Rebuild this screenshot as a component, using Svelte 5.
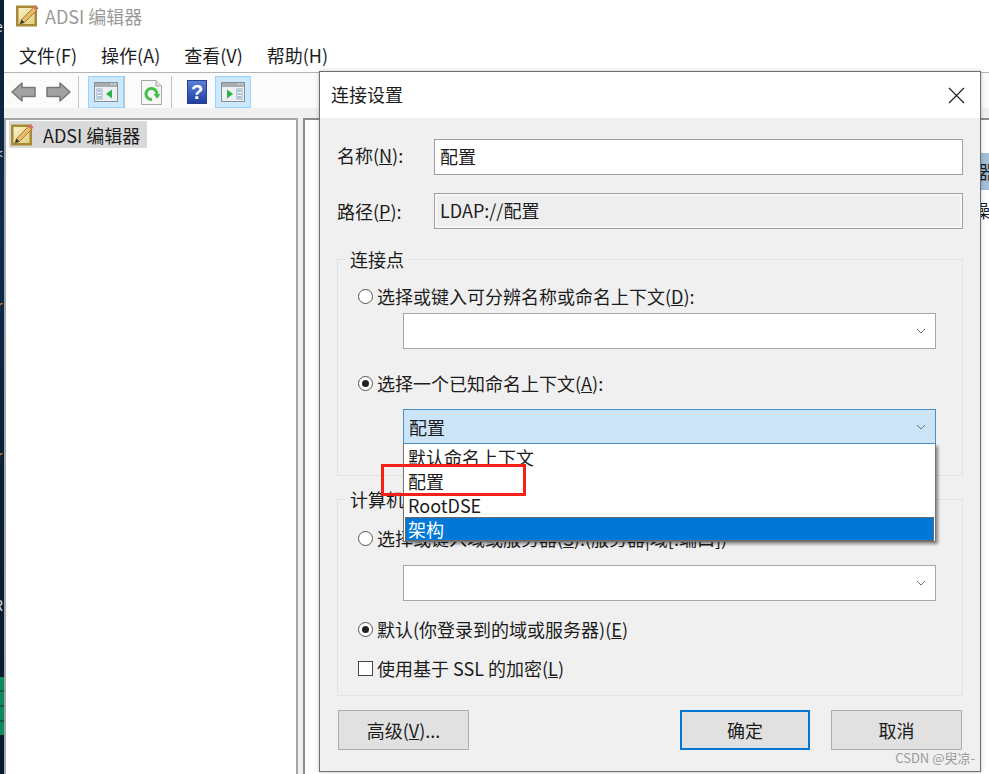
<script>
  const menus = [
    ['文件', 'F'],
    ['操作', 'A'],
    ['查看', 'V'],
    ['帮助', 'H']
  ];
  const options = ['默认命名上下文', '配置', 'RootDSE', '架构'];
</script>

{#snippet adsiIcon()}
  <svg class="adsi" viewBox="0 0 24 23">
    <defs>
      <linearGradient id="sheet" x1="0" y1="0" x2="1" y2="1">
        <stop offset="0" stop-color="#f8f0c8" />
        <stop offset="1" stop-color="#e6cf7c" />
      </linearGradient>
    </defs>
    <rect x="0" y="1.5" width="21" height="21" fill="#a98a34" />
    <rect x="2.5" y="4" width="16" height="16" fill="url(#sheet)" />
    <path d="M4 20 L5.5 15.5 L17.5 3.5 L20.5 6.5 L8.5 18.5 Z" fill="#e9bb5e" stroke="#75664a" stroke-width="0.7" />
    <path d="M4 20 L5.5 15.5 L8.5 18.5 Z" fill="#3d3a33" />
    <path d="M17.5 3.5 L19.6 1.2 L22.6 4.2 L20.5 6.5 Z" fill="#d9706a" />
  </svg>
{/snippet}

{#snippet chevron()}
  <svg class="chev" viewBox="0 0 10 6"><path d="M1 1 L5 5 L9 1" fill="none" stroke="#707070" stroke-width="1" /></svg>
{/snippet}

<div class="desk">
  <div class="strip">
    <i class="mark m1">e</i>
    <i class="mark m2">&lt;</i>
    <i class="mark m3">r</i>
    <i class="mark m4">r</i>
    <i class="mark m5">R</i>
    <b class="green"></b>
  </div>

  <div class="window">
    <div class="titlebar">
      <span class="tb-icon">{@render adsiIcon()}</span>
      <span class="tb-text">ADSI 编辑器</span>
    </div>
    <div class="menubar">
      {#each menus as [name, key]}
        <span>{name}({key})</span>
      {/each}
    </div>
    <div class="toolbar">
      <svg class="arrow first" viewBox="0 0 25 20"><path d="M1 10 L11 1 V5.5 H24 V14.5 H11 V19 Z" fill="#a2a2a2" stroke="#777" stroke-width="1.5" stroke-linejoin="round" /></svg>
      <svg class="arrow" viewBox="0 0 25 20"><path d="M24 10 L14 1 V5.5 H1 V14.5 H14 V19 Z" fill="#a2a2a2" stroke="#777" stroke-width="1.5" stroke-linejoin="round" /></svg>
      <span class="sep s1"></span>
      <span class="toggle">
        <svg viewBox="0 0 24 20" class="pane-ic">
          <rect x="0.5" y="0.5" width="23" height="19" fill="#eef1f2" stroke="#8a8f92" />
          <rect x="1" y="1" width="22" height="4" fill="#a9adaf" />
          <path d="M17 2h1.5M20 2h1.5" stroke="#fff" />
          <rect x="3" y="7" width="5" height="10" fill="#fff" stroke="#6f8ea8" stroke-width="0.7" />
          <path d="M4 9h3M4 12h3M4 15h3" stroke="#3f7fb5" />
          <path d="M18 7.5 V16.5 L12 12 Z" fill="#2bb24c" />
        </svg>
      </span>
      <span class="sep s2"></span>
      <svg class="page" viewBox="0 0 21 25">
        <path d="M0.5 0.5 H15 L20.5 6 V24.5 H0.5 Z" fill="#f6f6f6" stroke="#a8a8a8" />
        <path d="M15 0.5 V6 H20.5" fill="#e0e0e0" stroke="#a8a8a8" />
        <path d="M11 19.5 A5.5 5.5 0 1 1 16 14" fill="none" stroke="#45bd4f" stroke-width="3" />
        <path d="M12.5 14 H19.5 L16 18.8 Z" fill="#45bd4f" />
      </svg>
      <span class="sep s3"></span>
      <span class="help">?</span>
      <span class="toggle t2">
        <svg viewBox="0 0 24 20" class="pane-ic">
          <rect x="0.5" y="0.5" width="23" height="19" fill="#eef1f2" stroke="#8a8f92" />
          <rect x="1" y="1" width="22" height="4" fill="#a9adaf" />
          <path d="M17 2h1.5M20 2h1.5" stroke="#fff" />
          <rect x="16" y="7" width="5" height="10" fill="#fff" stroke="#6f8ea8" stroke-width="0.7" />
          <path d="M17 9h3M17 12h3M17 15h3" stroke="#3f7fb5" />
          <path d="M6 7.5 V16.5 L12 12 Z" fill="#2bb24c" />
        </svg>
      </span>
    </div>
    <div class="panes">
      <div class="tree">
        <div class="tree-item">
          {@render adsiIcon()}
          <span>ADSI 编辑器</span>
        </div>
      </div>
      <div class="content">
        <div class="actions">
          <div class="act-head">ADSI 编辑器</div>
          <div class="act-row">操作</div>
        </div>
      </div>
    </div>
  </div>

  <div class="dialog">
    <div class="dlg-title">
      <span class="dlg-name">连接设置</span>
      <svg class="close" viewBox="0 0 17 17"><path d="M1 1 L16 16 M16 1 L1 16" stroke="#1a1a1a" stroke-width="1.1" /></svg>
    </div>
    <div class="dlg-body">
      <div class="field">
        <span class="label up">名称(<u>N</u>):</span>
        <div class="input">配置</div>
      </div>
      <div class="field second">
        <span class="label">路径(<u>P</u>):</span>
        <div class="input readonly">LDAP://配置</div>
      </div>

      <div class="group first-group">
        <div class="legend">连接点</div>
        <div class="opt o1"><span class="radio"></span>选择或键入可分辨名称或命名上下文(<u>D</u>):</div>
        <div class="combo c1">{@render chevron()}</div>
        <div class="opt o2"><span class="radio on"></span>选择一个已知命名上下文(<u>A</u>):</div>
        <div class="combo focused c2">
          <span>配置</span>
          {@render chevron()}
          <div class="list">
            {#each options as option, i}
              <div class="item" class:sel={i === 3}>{option}</div>
            {/each}
          </div>
        </div>
      </div>

      <div class="group second-group">
        <div class="legend">计算机</div>
        <div class="opt o3"><span class="radio"></span>选择或键入域或服务器(<u>S</u>):(服务器|域[:端口])</div>
        <div class="combo c3">{@render chevron()}</div>
        <div class="opt o4"><span class="radio on"></span>默认(你登录到的域或服务器)(<u>E</u>)</div>
        <div class="opt o5"><span class="check"></span>使用基于 SSL 的加密(<u>L</u>)</div>
      </div>

      <div class="buttons">
        <button class="adv">高级(<u>V</u>)...</button>
        <button class="default">确定</button>
        <button>取消</button>
      </div>
    </div>
  </div>

  <div class="redbox"></div>
  <div class="watermark">CSDN @臾凉-</div>
</div>

<style>
  :global(body) {
    margin: 0;
    background: #fff;
  }
  .desk {
    position: relative;
    display: flex;
    width: 989px;
    height: 774px;
    overflow: hidden;
    font-family: "Noto Sans CJK SC", "Noto Sans", sans-serif;
    font-size: 18px;
    color: #1c1c1c;
  }
  .strip {
    position: relative;
    width: 4px;
    flex: none;
    overflow: hidden;
    background: linear-gradient(#0a2038, #0c2c4e 30%, #0a1f38 60%, #0a1a2e);
  }
  .mark {
    position: absolute;
    left: -5px;
    font-style: normal;
    font-size: 14px;
    line-height: 16px;
    color: #d8e2ea;
  }
  .m1 { top: 18px; }
  .m2 { top: 145px; }
  .m3 { top: 297px; left: -3px; color: #e08a1e; }
  .m4 { top: 447px; left: -3px; color: #e08a1e; }
  .m5 { top: 597px; left: -6px; }
  .green {
    position: absolute;
    top: 677px;
    left: 0;
    width: 4px;
    height: 58px;
    background: repeating-linear-gradient(#0e8a5f 0 13px, #0b5a4a 13px 15px);
  }
  .window {
    flex: 1;
    display: flex;
    flex-direction: column;
    min-width: 0;
  }
  .titlebar {
    height: 38px;
    display: flex;
    align-items: flex-start;
    padding-left: 12px;
    box-sizing: border-box;
  }
  .tb-icon {
    display: block;
    margin-top: 4px;
    line-height: 0;
  }
  .adsi {
    width: 24px;
    height: 23px;
  }
  .tb-text {
    margin: 3px 0 0 5px;
    line-height: 26px;
    color: #9a9a9a;
  }
  .menubar {
    height: 35px;
    box-sizing: border-box;
    display: flex;
    align-items: center;
    gap: 24px;
    padding-left: 15px;
    border-bottom: 1px solid #b4b4b4;
  }
  .toolbar {
    height: 35px;
    box-sizing: border-box;
    padding-top: 3px;
    display: flex;
    align-items: center;
    background: #fbfbfb;
  }
  .arrow {
    width: 25px;
    height: 20px;
    margin-left: 10px;
  }
  .arrow.first {
    margin-left: 7px;
  }
  .sep {
    width: 1px;
    height: 32px;
    background: #c4c4c4;
  }
  .s1 { margin: 0 9px 0 7px; }
  .s2 { margin: 0 16px 0 0; }
  .s3 { margin: 0 15px 0 9px; }
  .toggle {
    width: 36px;
    height: 32px;
    box-sizing: border-box;
    display: flex;
    align-items: center;
    justify-content: center;
    background: #cce8ff;
    border: 1px solid #99d1ff;
  }
  .t2 { margin-left: 8px; }
  .pane-ic {
    width: 24px;
    height: 20px;
  }
  .page {
    width: 21px;
    height: 25px;
  }
  .help {
    width: 20px;
    height: 24px;
    display: flex;
    align-items: center;
    justify-content: center;
    background: linear-gradient(#5a7fd8, #1f3f9e);
    border: 1px solid #2a3f86;
    box-sizing: border-box;
    color: #fff;
    font-family: "Liberation Sans", sans-serif;
    font-weight: 700;
    font-size: 20px;
  }
  .panes {
    flex: 1;
    min-height: 0;
    display: flex;
    gap: 5px;
    padding-top: 10px;
    background: #f0f0f0;
  }
  .tree {
    width: 294px;
    box-sizing: border-box;
    background: #fff;
    border: 2px solid #a6a6a6;
    border-width: 2px 2px 0;
    padding: 1px 0 0 3px;
  }
  .tree-item {
    width: 138px;
    height: 27px;
    display: flex;
    align-items: center;
    gap: 8px;
    padding-left: 2px;
    box-sizing: border-box;
    background: #d9d9d9;
  }
  .content {
    flex: 1;
    min-width: 0;
    background: #fff;
    border: 2px solid #8c8c8c;
    border-width: 2px 0 0 2px;
    overflow: hidden;
  }
  .actions {
    margin: 33px 0 0 560px;
    width: 200px;
  }
  .act-head {
    height: 37px;
    line-height: 37px;
    background: #a3bfda;
    text-indent: 34px;
    white-space: nowrap;
  }
  .act-row {
    margin-top: 8px;
    text-indent: 107px;
    line-height: 24px;
  }
  .dialog {
    position: absolute;
    left: 319px;
    top: 71px;
    width: 662px;
    height: 701px;
    box-sizing: border-box;
    border: 1px solid #6e6e6e;
    display: flex;
    flex-direction: column;
    box-shadow: 0 0 4px rgba(0, 0, 0, 0.25);
  }
  .dlg-title {
    height: 46px;
    flex: none;
    background: #fff;
    display: flex;
    align-items: center;
    justify-content: space-between;
    padding: 0 15px 0 11px;
  }
  .dlg-name {
    margin-bottom: 2px;
  }
  .close {
    width: 17px;
    height: 17px;
  }
  .dlg-body {
    flex: 1;
    background: #f0f0f0;
    padding: 21px 17px 0;
  }
  .field {
    display: flex;
    align-items: center;
    height: 36px;
  }
  .second {
    margin-top: 18px;
  }
  .label {
    width: 97px;
    flex: none;
    box-sizing: border-box;
  }
  .label.up {
    margin-bottom: 4px;
  }
  .input {
    width: 529px;
    height: 36px;
    box-sizing: border-box;
    display: flex;
    align-items: center;
    padding: 0 0 2px 5px;
    background: #fff;
    border: 1px solid #a0a0a0;
  }
  .readonly {
    background: #eeeeee;
    box-shadow: inset 0 0 0 2px #f8f8f8;
  }
  .group {
    border: 1px solid #e2e2e2;
    padding: 0 26px 0 20px;
    box-sizing: border-box;
  }
  .first-group {
    margin-top: 30px;
    height: 217px;
  }
  .second-group {
    margin-top: 23px;
    height: 197px;
  }
  .legend {
    width: fit-content;
    height: 24px;
    line-height: 24px;
    margin: -13px 0 0 -12px;
    padding: 0 4px;
    background: #f0f0f0;
  }
  .opt {
    display: flex;
    align-items: center;
    height: 24px;
    white-space: pre;
  }
  .o1 { margin-top: 13px; }
  .o2 { margin-top: 22px; }
  .o3 { margin-top: 15px; }
  .o4 { margin-top: 16px; }
  .o5 { margin-top: 15px; }
  .radio {
    width: 15px;
    height: 15px;
    box-sizing: border-box;
    flex: none;
    border: 1px solid #555;
    border-radius: 50%;
    background: #fff;
    margin-right: 4px;
    display: flex;
    align-items: center;
    justify-content: center;
  }
  .radio.on::after {
    content: "";
    width: 7px;
    height: 7px;
    border-radius: 50%;
    background: #222;
  }
  .check {
    width: 15px;
    height: 15px;
    box-sizing: border-box;
    flex: none;
    border: 1px solid #444;
    background: #fff;
    margin-right: 4px;
  }
  .combo {
    position: relative;
    width: 533px;
    margin-left: 45px;
    box-sizing: border-box;
    display: flex;
    align-items: center;
    justify-content: space-between;
    padding: 0 9px 0 5px;
    background: #fff;
    border: 1px solid #a6a6a6;
  }
  .chev {
    width: 10px;
    height: 6px;
    margin-left: auto;
  }
  .c1 { height: 36px; margin-top: 5px; }
  .c2 {
    height: 35px;
    margin-top: 14px;
    background: #cce4f7;
    border-color: #4a90c8;
  }
  .c3 { height: 36px; margin-top: 15px; }
  .list {
    position: absolute;
    top: 34px;
    left: -1px;
    width: 533px;
    height: 98px;
    box-sizing: border-box;
    padding: 1px 1px 0;
    background: #fff;
    border: 1px solid #767676;
    border-top: none;
    box-shadow: 2px 2px 3px rgba(0, 0, 0, 0.45);
    line-height: 24px;
  }
  .item {
    height: 24px;
    padding-left: 3px;
    white-space: nowrap;
  }
  .item.sel {
    background: #0078d7;
    color: #fff;
    outline: 1px solid #6a6a6a;
    outline-offset: -1px;
  }
  .buttons {
    display: flex;
    margin-top: 14px;
    padding-left: 1px;
    gap: 21px;
  }
  button {
    width: 131px;
    height: 40px;
    box-sizing: border-box;
    padding: 0;
    font: inherit;
    color: inherit;
    background: #e1e1e1;
    border: 1px solid #adadad;
  }
  .adv {
    margin-right: 190px;
  }
  .default {
    width: 130px;
    border: 2px solid #0078d7;
  }
  .redbox {
    position: absolute;
    left: 381px;
    top: 464px;
    width: 145px;
    height: 32px;
    box-sizing: border-box;
    border: 3px solid #f5201a;
  }
  .watermark {
    position: absolute;
    right: 14px;
    top: 750px;
    font-size: 13px;
    line-height: 16px;
    color: #9a9a9a;
  }
</style>
